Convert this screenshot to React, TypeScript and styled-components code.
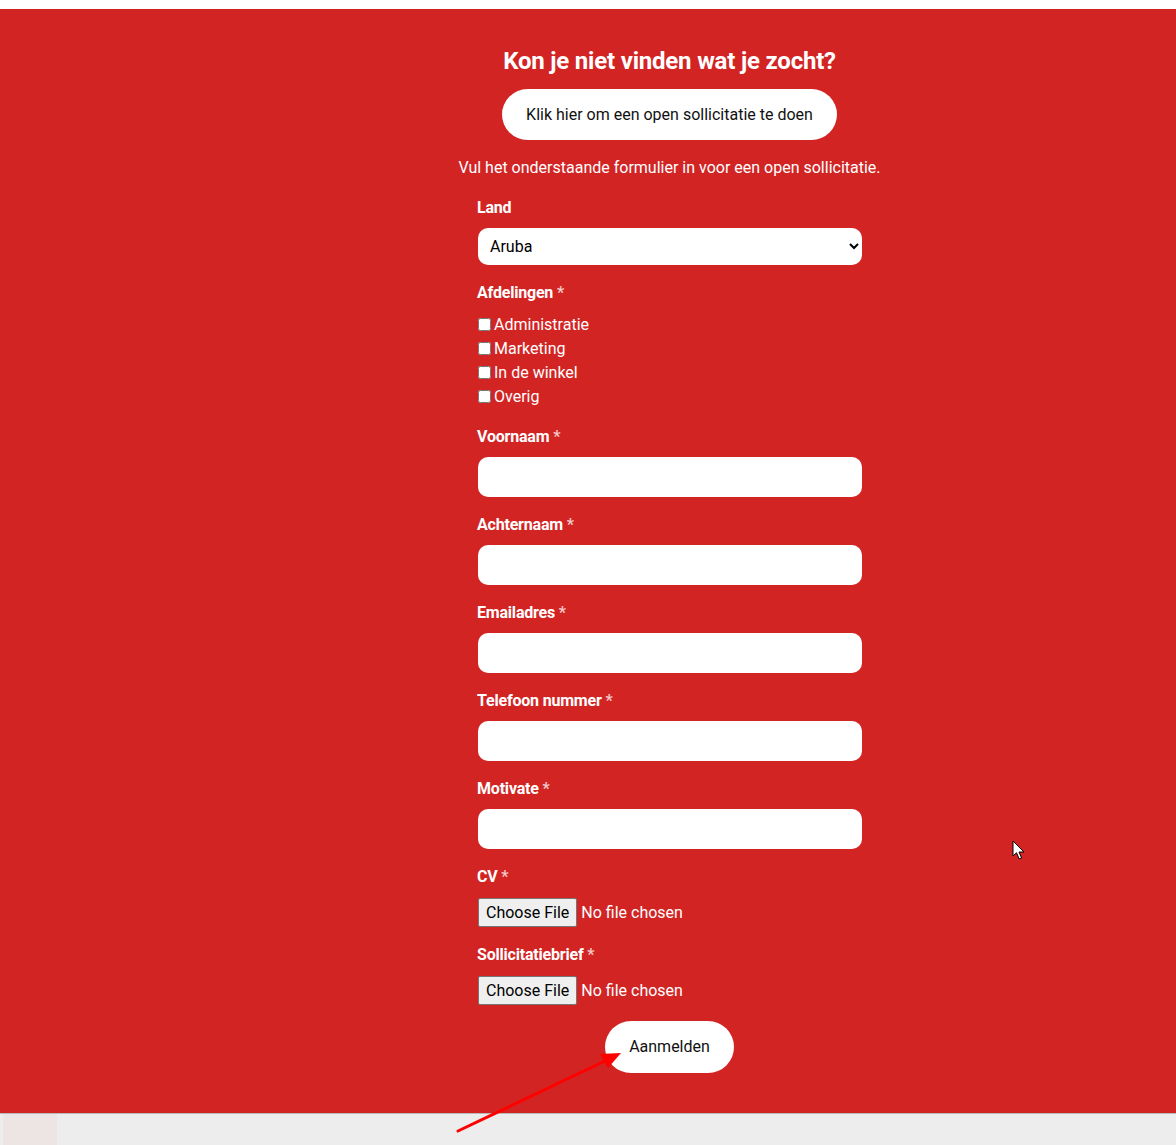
import styled, { createGlobalStyle } from 'styled-components';

const GlobalStyle = createGlobalStyle`
  html, body {
    margin: 0;
    padding: 0;
    background: #ffffff;
    font-family: Roboto, 'Liberation Sans', Arial, sans-serif;
  }
  * {
    box-sizing: border-box;
  }
`;

const departments = ['Administratie', 'Marketing', 'In de winkel', 'Overig'];
const textFields = ['Voornaam', 'Achternaam', 'Emailadres', 'Telefoon nummer', 'Motivate'];
const fileFields = ['CV', 'Sollicitatiebrief'];

export default function App() {
  return (
    <Page>
      <GlobalStyle />
      <TopStrip />
      <Section>
        <Column>
          <Heading>Kon je niet vinden wat je zocht?</Heading>
          <PillButton type="button">Klik hier om een open sollicitatie te doen</PillButton>
          <Intro>Vul het onderstaande formulier in voor een open sollicitatie.</Intro>

          <Form onSubmit={(e) => e.preventDefault()}>
            <Field>
              <Label>Land</Label>
              <Select defaultValue="Aruba">
                <option>Aruba</option>
                <option>Bonaire</option>
                <option>Curaçao</option>
                <option>Nederland</option>
              </Select>
            </Field>

            <Field>
              <Label>
                Afdelingen <Req>*</Req>
              </Label>
              <CheckList>
                {departments.map((d) => (
                  <CheckRow key={d}>
                    <Checkbox type="checkbox" />
                    {d}
                  </CheckRow>
                ))}
              </CheckList>
            </Field>

            {textFields.map((f) => (
              <Field key={f}>
                <Label>
                  {f} <Req>*</Req>
                </Label>
                <TextInput type="text" />
              </Field>
            ))}

            {fileFields.map((f) => (
              <Field key={f} $gap={9}>
                <Label>
                  {f} <Req>*</Req>
                </Label>
                <FileInput type="file" />
              </Field>
            ))}

            <SubmitRow>
              <PillButton type="submit" $small>
                Aanmelden
              </PillButton>
            </SubmitRow>
          </Form>
        </Column>
      </Section>
      <Footer>
        <FooterBlock />
      </Footer>

      <Annotation width="180" height="90" viewBox="0 0 180 90">
        <line x1="3" y1="85" x2="152" y2="14" stroke="#ff0000" strokeWidth="3" strokeLinecap="round" />
        <polygon points="166,7 145,8 153,22" fill="#ff0000" />
      </Annotation>

      <Cursor width="14" height="22" viewBox="0 0 14 22">
        <path
          d="M1 1 L1 16 L4.5 12.8 L7.2 19 L9.6 18 L7 12 L12 12 Z"
          fill="#ffffff"
          stroke="#000000"
          strokeWidth="1"
          strokeLinejoin="round"
        />
      </Cursor>
    </Page>
  );
}

const Page = styled.div`
  position: relative;
  width: 1176px;
  min-height: 1145px;
  overflow: hidden;
`;

const TopStrip = styled.div`
  height: 9px;
  background: #ffffff;
`;

const Section = styled.section`
  background: #d32424;
  padding: 38px 0 40px 163px;
`;

const Column = styled.div`
  display: flex;
  flex-direction: column;
  align-items: center;
  color: #ffffff;
`;

const Heading = styled.h2`
  margin: 0 0 14px;
  font-size: 24px;
  line-height: 28px;
  font-weight: 700;
  letter-spacing: -0.2px;
  color: #ffffff;
`;

const PillButton = styled.button<{ $small?: boolean }>`
  border: none;
  background: #ffffff;
  color: #111111;
  font-family: Roboto, 'Liberation Sans', Arial, sans-serif;
  font-size: 16px;
  line-height: 19px;
  border-radius: 999px;
  padding: ${({ $small }) => ($small ? '16px 24px 17px' : '16px 24px')};
  cursor: pointer;
`;

const Intro = styled.p`
  margin: 18px 0 0;
  font-size: 16px;
  line-height: 20px;
`;

const Form = styled.form`
  width: 385px;
  margin-top: 18px;
  display: flex;
  flex-direction: column;
`;

const Field = styled.div<{ $gap?: number; $after?: number }>`
  display: flex;
  flex-direction: column;
  align-items: flex-start;
  gap: ${({ $gap }) => $gap ?? 8}px;
  margin-bottom: ${({ $after }) => $after ?? 16}px;
`;

const Label = styled.label`
  display: block;
  font-size: 16px;
  line-height: 24px;
  font-weight: 700;
  letter-spacing: -0.2px;
  color: #ffffff;
`;

const Req = styled.span`
  color: rgba(255, 255, 255, 0.75);
`;

const Select = styled.select`
  width: 384px;
  height: 37px;
  margin-left: 1px;
  border: none;
  border-radius: 10px;
  background: #ffffff;
  color: #000000;
  font-family: Roboto, 'Liberation Sans', Arial, sans-serif;
  font-size: 16px;
  padding: 0 4px 0 8px;
`;

const CheckList = styled.div`
  display: flex;
  flex-direction: column;
`;

const CheckRow = styled.label`
  display: flex;
  align-items: center;
  gap: 3px;
  font-size: 16px;
  line-height: 24px;
  color: #ffffff;
`;

const Checkbox = styled.input`
  width: 13px;
  height: 13px;
  margin: -2px 0 0 1px;
`;

const TextInput = styled.input`
  width: 384px;
  height: 40px;
  margin-left: 1px;
  border: none;
  border-radius: 10px;
  background: #ffffff;
  font-family: Roboto, 'Liberation Sans', Arial, sans-serif;
  font-size: 16px;
  padding: 0 12px;
`;

const FileInput = styled.input`
  height: 29px;
  margin-left: 1px;
  font-family: Roboto, 'Liberation Sans', Arial, sans-serif;
  font-size: 16px;
  color: #ffffff;

  &::file-selector-button {
    height: 29px;
    font-family: Roboto, 'Liberation Sans', Arial, sans-serif;
    font-size: 16px;
    padding: 0 7px;
    margin-right: 4px;
    color: #000000;
    background: #efefef;
    border: 1px solid #767676;
    border-radius: 2px;
  }
`;

const SubmitRow = styled.div`
  display: flex;
  justify-content: center;
`;

const Footer = styled.footer`
  height: 32px;
  background: #ededed;
  border-top: 1px solid #b9b9b9;
  padding-left: 3px;
`;

const FooterBlock = styled.div`
  width: 54px;
  height: 100%;
  background: #ede5e3;
`;

const Annotation = styled.svg`
  position: absolute;
  left: 455px;
  top: 1046px;
  pointer-events: none;
`;

const Cursor = styled.svg`
  position: absolute;
  left: 1012px;
  top: 840px;
  pointer-events: none;
`;
